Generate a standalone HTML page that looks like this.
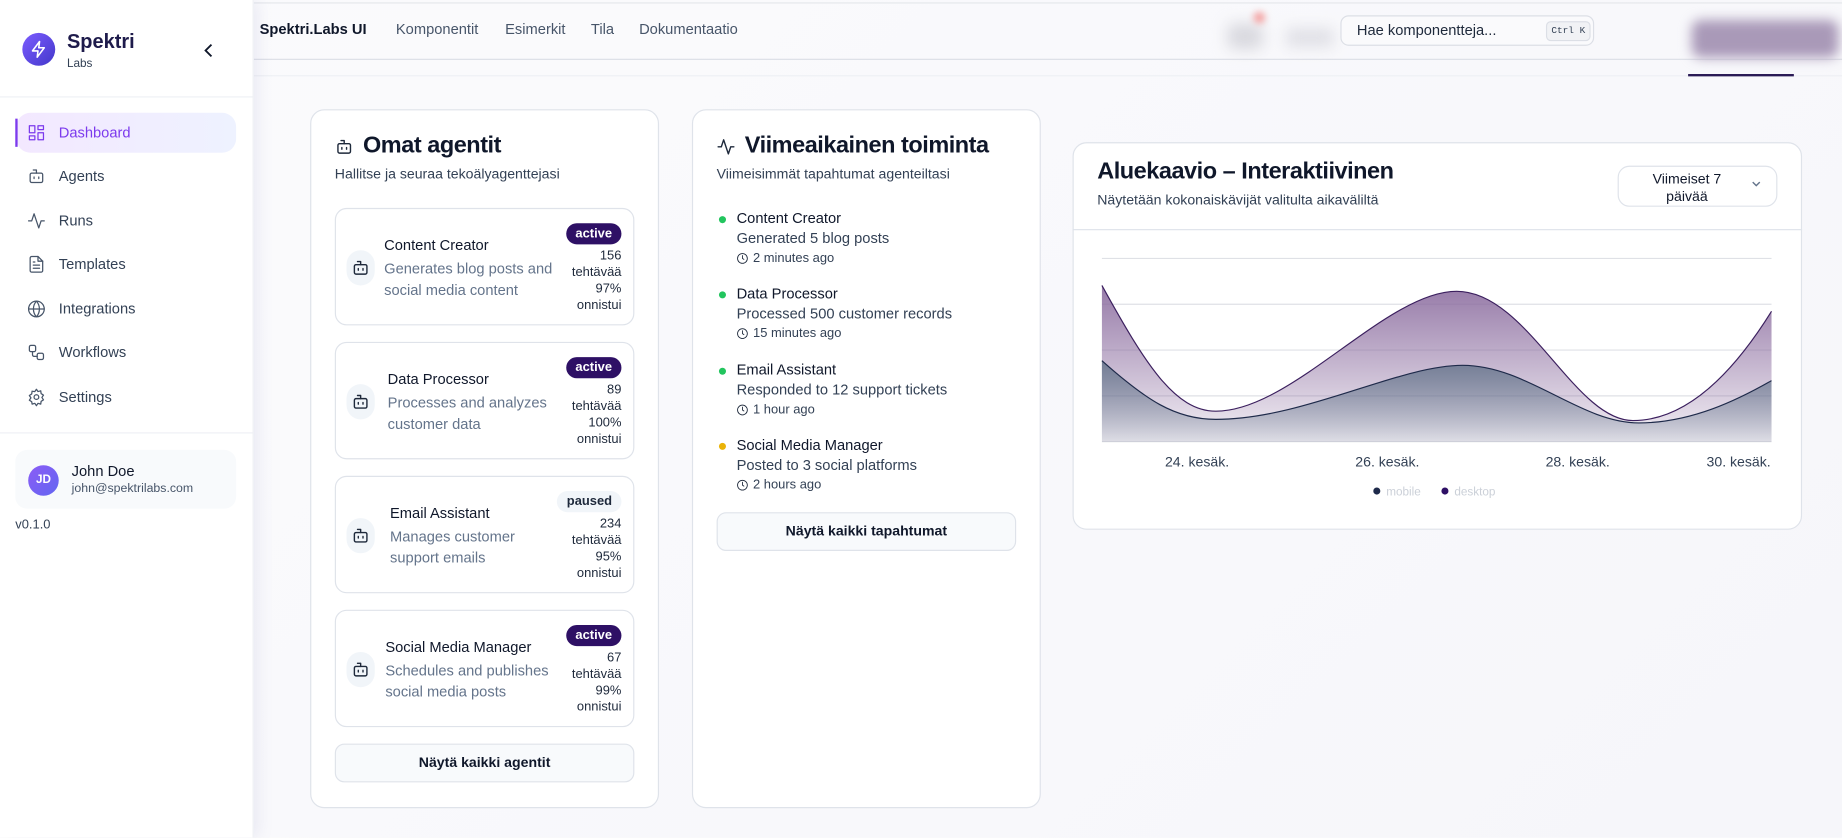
<!DOCTYPE html>
<html><head><meta charset="utf-8"><style>
*{box-sizing:border-box;margin:0;padding:0}
html,body{width:1842px;height:837px;overflow:hidden;background:#fafafc;font-family:"Liberation Sans",sans-serif;color:#0f172a}
#w{position:absolute;left:0;top:0;width:1568px;height:713px;transform:scale(1.17475);transform-origin:0 0;background:linear-gradient(135deg,#fbfbfd,#f6f6fa)}
.a{position:absolute}
.sb{left:0;top:0;width:216px;height:713px;background:#fff;box-shadow:4px 0 12px rgba(120,120,180,.12);border-right:1px solid #eef0f5}
.nav{position:absolute;left:23px;font-size:12.5px;color:#334155;display:flex;align-items:center;gap:11px}
.nav svg{width:16px;height:16px;stroke:#475569;fill:none;stroke-width:1.6;stroke-linecap:round;stroke-linejoin:round}
.card{position:absolute;background:#fff;border:1px solid #dfe3ea;border-radius:12px}
.h2{position:absolute;font-size:20px;font-weight:bold;color:#0f172a;letter-spacing:-.4px}
.sub{position:absolute;font-size:12px;color:#334155}
.ag{position:absolute;left:20px;width:255px;height:100px;border:1px solid #dfe3ea;border-radius:10px;background:#fff}
.ag .ic{position:absolute;left:9px;top:35px;width:24px;height:30px;border-radius:12px;background:#f1f5f9}
.ag .ic svg{position:absolute;left:4px;top:7px;width:16px;height:16px}
.ag .n{position:absolute;top:24px;font-size:12.5px;color:#0f172a}
.ag .d{position:absolute;top:42px;font-size:12.5px;color:#64748b;line-height:18px;width:150px}
.bd{position:absolute;right:10px;top:12px;height:18px;padding:0 8px;border-radius:9px;background:#2e1065;color:#fff;font-size:11px;font-weight:bold;line-height:18px}
.bd.p{background:#f1f5f9;color:#1e293b}
.st{position:absolute;right:10px;top:33px;font-size:11px;color:#1e293b;text-align:right;line-height:14px}
.btn{position:absolute;height:33px;border:1px solid #dfe3ea;border-radius:8px;background:#f8fafc;font-size:12px;font-weight:bold;color:#0f172a;text-align:center;line-height:31px}
.ev{position:absolute;left:37px;font-size:12.5px;color:#0f172a}
.ev .t{font-weight:normal;height:17px}
.ev .d{color:#334155;height:18px}
.ev .tm{font-size:11px;color:#334155;display:flex;align-items:center;gap:4px}
.dot{position:absolute;left:22px;width:6px;height:6px;border-radius:3px;background:#22c55e}
.rb{fill:none;stroke:#1e293b;stroke-width:1.8;stroke-linecap:round;stroke-linejoin:round}
</style></head><body><div id="w">
<div class="a" style="left:0;top:2px;width:1568px;height:1px;background:#e5e7eb"></div>
<div class="a" style="left:216px;top:50px;width:1352px;height:1px;background:#dcdfe6"></div>
<div class="a" style="left:216px;top:64px;width:1352px;height:1px;background:#eef0f4"></div>
<div class="a" style="left:221px;top:18px;font-size:12.5px;font-weight:bold">Spektri.Labs UI</div>
<div class="a" style="left:337px;top:18px;font-size:12.5px;color:#475569">Komponentit</div>
<div class="a" style="left:430px;top:18px;font-size:12.5px;color:#475569">Esimerkit</div>
<div class="a" style="left:503px;top:18px;font-size:12.5px;color:#475569">Tila</div>
<div class="a" style="left:544px;top:18px;font-size:12.5px;color:#475569">Dokumentaatio</div>
<div class="a" style="left:1045px;top:20px;width:30px;height:22px;background:#d9d9df;filter:blur(6px);border-radius:6px"></div>
<div class="a" style="left:1067px;top:10px;width:10px;height:10px;background:#f4a5a5;filter:blur(3px);border-radius:5px"></div>
<div class="a" style="left:1095px;top:24px;width:40px;height:16px;background:#e0e0e6;filter:blur(6px)"></div>
<div class="a" style="left:1141px;top:13px;width:216px;height:26px;border:1px solid #dcdfe6;border-radius:7px;background:#fafafc"></div>
<div class="a" style="left:1155px;top:19px;font-size:12.5px;color:#1e293b">Hae komponentteja...</div>
<div class="a" style="left:1316px;top:18px;width:38px;height:17px;border:1px solid #dcdfe6;border-radius:4px;background:#f1f2f5;font-family:'Liberation Mono',monospace;font-size:8px;line-height:15px;text-align:center;color:#334155">Ctrl K</div>
<div class="a" style="left:1440px;top:17px;width:125px;height:32px;background:#a999b8;filter:blur(5px);border-radius:8px"></div>
<div class="a" style="left:1437px;top:63px;width:90px;height:2px;background:#2a1a55"></div>
<div class="a sb"></div>
<div class="a" style="left:19px;top:28px;width:28px;height:28px;border-radius:14px;background:linear-gradient(135deg,#7c5cff,#4338ca)"></div>
<svg class="a" style="left:25px;top:34px" width="16" height="16" viewBox="0 0 24 24"><path d="M13 2 4 14h7l-1 8 9-12h-7z" fill="none" stroke="#fff" stroke-width="2" stroke-linejoin="round"/></svg>
<div class="a" style="left:57px;top:26px;font-size:17px;font-weight:bold;color:#1e1b4b">Spektri</div>
<div class="a" style="left:57px;top:49px;font-size:10px;color:#334155">Labs</div>
<svg class="a" style="left:172px;top:36px" width="12" height="14" viewBox="0 0 12 14"><path d="M8 2 3 7l5 5" fill="none" stroke="#0f172a" stroke-width="1.6"/></svg>
<div class="a" style="left:0;top:82px;width:216px;height:1px;background:#eef0f4"></div>
<div class="a" style="left:14px;top:96px;width:187px;height:34px;border-radius:12px;background:linear-gradient(90deg,#f3e8ff,#eef2ff)"></div>
<div class="a" style="left:13px;top:101px;width:2px;height:24px;background:#7c3aed"></div>
<div class="nav" style="top:105px"><svg viewBox="0 0 24 24" style="stroke:#7c3aed"><rect x="3" y="3" width="7" height="9"/><rect x="14" y="3" width="7" height="5"/><rect x="14" y="12" width="7" height="9"/><rect x="3" y="16" width="7" height="5"/></svg><span style="color:#7c3aed">Dashboard</span></div>
<div class="nav" style="top:142px"><svg viewBox="0 0 24 24"><rect x="4" y="8" width="16" height="12" rx="2"/><path d="M12 8V4H8M9 13v2M15 13v2"/></svg>Agents</div>
<div class="nav" style="top:180px"><svg viewBox="0 0 24 24"><path d="M22 12h-4l-3 9L9 3l-3 9H2"/></svg>Runs</div>
<div class="nav" style="top:217px"><svg viewBox="0 0 24 24"><path d="M14 2H6a2 2 0 0 0-2 2v16a2 2 0 0 0 2 2h12a2 2 0 0 0 2-2V8z"/><path d="M14 2v6h6M8 13h8M8 17h8M8 9h2"/></svg>Templates</div>
<div class="nav" style="top:255px"><svg viewBox="0 0 24 24"><circle cx="12" cy="12" r="10"/><path d="M2 12h20M12 2a15 15 0 0 1 0 20M12 2a15 15 0 0 0 0 20"/></svg>Integrations</div>
<div class="nav" style="top:292px"><svg viewBox="0 0 24 24"><rect x="3" y="3" width="8" height="8" rx="2"/><path d="M7 11v4a2 2 0 0 0 2 2h4"/><rect x="13" y="13" width="8" height="8" rx="2"/></svg>Workflows</div>
<div class="nav" style="top:330px"><svg viewBox="0 0 24 24"><circle cx="12" cy="12" r="3"/><path d="M12 2l2 3 3.5-1 .5 3.5 3 2-2 3 2 3-3 2-.5 3.5-3.5-1-2 3-2-3-3.5 1L6 18l-3-2 2-3-2-3 3-2 .5-3.5L10 5z"/></svg>Settings</div>
<div class="a" style="left:0;top:368px;width:216px;height:1px;background:#eef0f4"></div>
<div class="a" style="left:13px;top:383px;width:188px;height:50px;border-radius:10px;background:#f8fafc"></div>
<div class="a" style="left:24px;top:396px;width:26px;height:26px;border-radius:13px;background:linear-gradient(135deg,#8b5cf6,#6366f1);color:#fff;font-size:10px;font-weight:bold;text-align:center;line-height:26px">JD</div>
<div class="a" style="left:61px;top:394px;font-size:12.5px;color:#0f172a">John Doe</div>
<div class="a" style="left:61px;top:410px;font-size:10.5px;color:#475569">john@spektrilabs.com</div>
<div class="a" style="left:13px;top:441px;font-size:11px;color:#334155">v0.1.0</div>
<div class="card" style="left:264px;top:93px;width:297px;height:595px">
<svg class="a" style="left:20px;top:23px" width="16" height="16" viewBox="0 0 24 24"><g class="rb"><rect x="4" y="8" width="16" height="12" rx="2"/><path d="M12 8V4H8M9 13v2M15 13v2"/></g></svg>
<div class="h2" style="left:44px;top:19px">Omat agentit</div>
<div class="sub" style="left:20px;top:47px">Hallitse ja seuraa tekoälyagenttejasi</div>
<div class="ag" style="top:83px"><div class="ic"><svg viewBox="0 0 24 24"><g class="rb"><rect x="4" y="8" width="16" height="12" rx="2"/><path d="M12 8V4H8M9 13v2M15 13v2"/></g></svg></div><div class="n" style="left:41px">Content Creator</div><div class="d" style="left:41px">Generates blog posts and social media content</div><div class="bd">active</div><div class="st">156<br>tehtävää<br>97%<br>onnistui</div></div>
<div class="ag" style="top:197px"><div class="ic"><svg viewBox="0 0 24 24"><g class="rb"><rect x="4" y="8" width="16" height="12" rx="2"/><path d="M12 8V4H8M9 13v2M15 13v2"/></g></svg></div><div class="n" style="left:44px">Data Processor</div><div class="d" style="left:44px">Processes and analyzes customer data</div><div class="bd">active</div><div class="st">89<br>tehtävää<br>100%<br>onnistui</div></div>
<div class="ag" style="top:311px"><div class="ic"><svg viewBox="0 0 24 24"><g class="rb"><rect x="4" y="8" width="16" height="12" rx="2"/><path d="M12 8V4H8M9 13v2M15 13v2"/></g></svg></div><div class="n" style="left:46px">Email Assistant</div><div class="d" style="left:46px;width:130px">Manages customer support emails</div><div class="bd p">paused</div><div class="st">234<br>tehtävää<br>95%<br>onnistui</div></div>
<div class="ag" style="top:425px"><div class="ic"><svg viewBox="0 0 24 24"><g class="rb"><rect x="4" y="8" width="16" height="12" rx="2"/><path d="M12 8V4H8M9 13v2M15 13v2"/></g></svg></div><div class="n" style="left:42px">Social Media Manager</div><div class="d" style="left:42px">Schedules and publishes social media posts</div><div class="bd">active</div><div class="st">67<br>tehtävää<br>99%<br>onnistui</div></div>
<div class="btn" style="left:20px;top:539px;width:255px">Näytä kaikki agentit</div>
</div>
<div class="card" style="left:589px;top:93px;width:297px;height:595px">
<svg class="a" style="left:20px;top:23px" width="16" height="16" viewBox="0 0 24 24"><path d="M22 12h-4l-3 9L9 3l-3 9H2" class="rb"/></svg>
<div class="h2" style="left:44px;top:19px">Viimeaikainen toiminta</div>
<div class="sub" style="left:20px;top:47px">Viimeisimmät tapahtumat agenteiltasi</div>
<div class="dot" style="top:90px"></div><div class="ev" style="top:85px"><div class="t">Content Creator</div><div class="d">Generated 5 blog posts</div><div class="tm"><svg width="10" height="10" viewBox="0 0 24 24"><circle cx="12" cy="12" r="10" class="rb" stroke-width="2.5"/><path d="M12 6v6l3 2" class="rb" stroke-width="2.5"/></svg>2 minutes ago</div></div>
<div class="dot" style="top:154px"></div><div class="ev" style="top:149px"><div class="t">Data Processor</div><div class="d">Processed 500 customer records</div><div class="tm"><svg width="10" height="10" viewBox="0 0 24 24"><circle cx="12" cy="12" r="10" class="rb" stroke-width="2.5"/><path d="M12 6v6l3 2" class="rb" stroke-width="2.5"/></svg>15 minutes ago</div></div>
<div class="dot" style="top:219px"></div><div class="ev" style="top:214px"><div class="t">Email Assistant</div><div class="d">Responded to 12 support tickets</div><div class="tm"><svg width="10" height="10" viewBox="0 0 24 24"><circle cx="12" cy="12" r="10" class="rb" stroke-width="2.5"/><path d="M12 6v6l3 2" class="rb" stroke-width="2.5"/></svg>1 hour ago</div></div>
<div class="dot" style="top:283px;background:#eab308"></div><div class="ev" style="top:278px"><div class="t">Social Media Manager</div><div class="d">Posted to 3 social platforms</div><div class="tm"><svg width="10" height="10" viewBox="0 0 24 24"><circle cx="12" cy="12" r="10" class="rb" stroke-width="2.5"/><path d="M12 6v6l3 2" class="rb" stroke-width="2.5"/></svg>2 hours ago</div></div>
<div class="btn" style="left:20px;top:342px;width:255px">Näytä kaikki tapahtumat</div>
</div>
<div class="card" style="left:913px;top:121px;width:621px;height:330px"></div>
<div class="h2" style="left:934px;top:135px">Aluekaavio – Interaktiivinen</div>
<div class="sub" style="left:934px;top:163px">Näytetään kokonaiskävijät valitulta aikaväliltä</div>
<div class="a" style="left:1377px;top:141px;width:136px;height:35px;border:1px solid #dfe3ea;border-radius:10px;font-size:12px;color:#0f172a;line-height:15px;padding:3px 0 0 18px"><div style="width:80px;text-align:center">Viimeiset 7<br>päivää</div></div>
<svg class="a" style="left:1490px;top:153px" width="10" height="8" viewBox="0 0 10 8"><path d="M2 2l3 3 3-3" fill="none" stroke="#64748b" stroke-width="1.2"/></svg>
<div class="a" style="left:913px;top:195px;width:621px;height:1px;background:#dfe3ea"></div>
<svg class="a" style="left:0;top:0" width="1568" height="713">
<defs><linearGradient id="g1" x1="0" y1="0" x2="0" y2="1"><stop offset="0" stop-color="#8a6b9e" stop-opacity=".9"/><stop offset="1" stop-color="#8a6b9e" stop-opacity=".1"/></linearGradient>
<linearGradient id="g2" x1="0" y1="0" x2="0" y2="1"><stop offset="0" stop-color="#64748b" stop-opacity=".85"/><stop offset="1" stop-color="#64748b" stop-opacity=".15"/></linearGradient></defs>
<g stroke="#dfe1e6" stroke-width="1"><line x1="938" y1="220" x2="1508" y2="220"/><line x1="938" y1="259" x2="1508" y2="259"/><line x1="938" y1="298" x2="1508" y2="298"/><line x1="938" y1="337" x2="1508" y2="337"/><line x1="938" y1="376" x2="1508" y2="376"/></g>
<path d="M938,243 C975,310 1000,350 1035,350 C1100,350 1180,248 1240,248 C1300,248 1340,358 1390,358 C1440,358 1480,310 1508,265 L1508,376 L938,376Z" fill="url(#g1)"/>
<path d="M938,243 C975,310 1000,350 1035,350 C1100,350 1180,248 1240,248 C1300,248 1340,358 1390,358 C1440,358 1480,310 1508,265" fill="none" stroke="#3b1f5e" stroke-width="1"/>
<path d="M938,307 C975,340 1000,357 1035,357 C1110,357 1190,311 1245,311 C1300,311 1345,360 1395,360 C1440,360 1480,340 1508,324 L1508,376 L938,376Z" fill="url(#g2)"/>
<path d="M938,307 C975,340 1000,357 1035,357 C1110,357 1190,311 1245,311 C1300,311 1345,360 1395,360 C1440,360 1480,340 1508,324" fill="none" stroke="#1e2a4a" stroke-width="1"/>
<g font-family="Liberation Sans" font-size="12" fill="#334155" text-anchor="middle"><text x="1019" y="397">24. kesäk.</text><text x="1181" y="397">26. kesäk.</text><text x="1343" y="397">28. kesäk.</text><text x="1480" y="397">30. kesäk.</text></g>
<circle cx="1172" cy="418" r="3" fill="#1e2a4a"/><text x="1180" y="422" font-family="Liberation Sans" font-size="10" fill="#cbd0d8">mobile</text>
<circle cx="1230" cy="418" r="3" fill="#2e1065"/><text x="1238" y="422" font-family="Liberation Sans" font-size="10" fill="#cbd0d8">desktop</text>
</svg>
</div></body></html>
